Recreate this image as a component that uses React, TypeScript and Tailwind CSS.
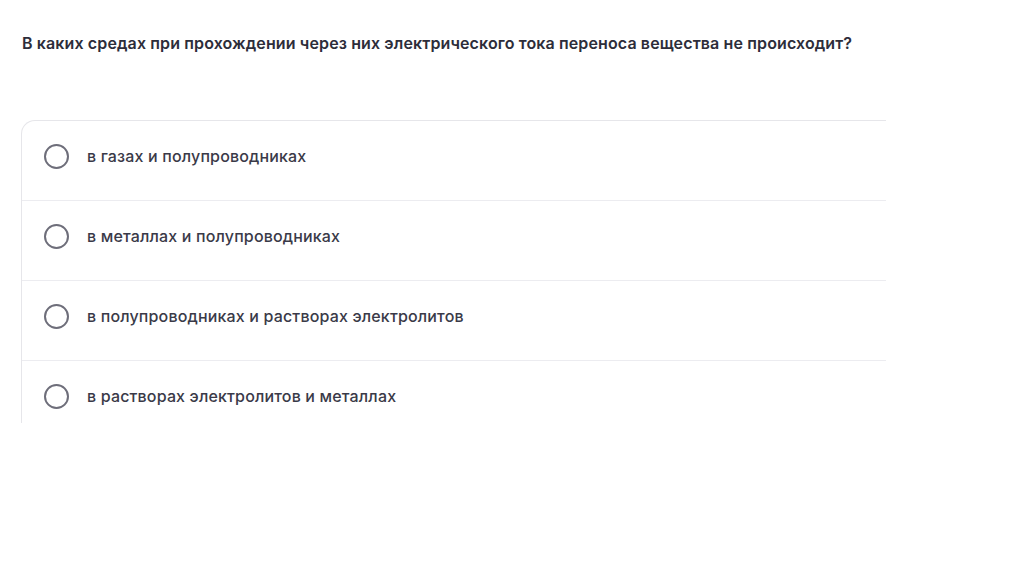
const options = [
  "в газах и полупроводниках",
  "в металлах и полупроводниках",
  "в полупроводниках и растворах электролитов",
  "в растворах электролитов и металлах",
];

function Radio() {
  return <span className="block h-[25px] w-[25px] shrink-0 rounded-full border-[2.5px] border-[#6e6e7a]" />;
}

export default function App() {
  return (
    <div
      className="h-[574px] w-[1024px] bg-white"
      style={{ fontFamily: "Inter, 'Noto Sans', sans-serif" }}
    >
      <div className="pl-[22px] pt-[33px] text-[16px] font-semibold leading-[20px] tracking-[0.12px] text-[#2d2d3a]">
        В каких средах при прохождении через них электрического тока переноса вещества не происходит?
      </div>

      <div className="ml-[21px] mt-[67px] h-[303px] w-[865px] overflow-hidden">
        <div className="rounded-tl-[14px] border-l border-t border-[#e6e6ea]">
          {options.map((text) => (
            <div key={text} className="flex h-[80px] items-start gap-[18px] border-b border-[#ececf0] pl-[22px] pt-[23px]">
              <Radio />
              <span className="text-[16px] font-medium leading-[25px] tracking-[0.01em] text-[#3a3a48]">{text}</span>
            </div>
          ))}
        </div>
      </div>
    </div>
  );
}
